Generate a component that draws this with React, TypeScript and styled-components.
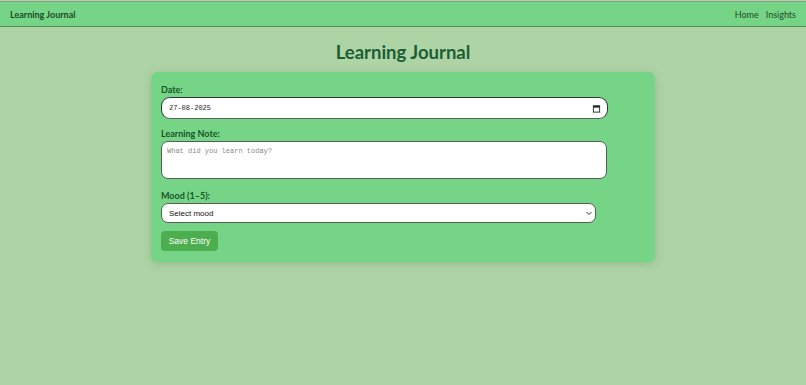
import styled, { createGlobalStyle } from "styled-components";

const GlobalStyle = createGlobalStyle`
  body {
    margin: 0;
    background: #aed4a6;
    font-family: Lato, "Open Sans", sans-serif;
  }
`;

const Page = styled.div`
  min-height: 385px;
  background: #aed4a6;
`;

const Navbar = styled.nav`
  display: flex;
  justify-content: space-between;
  align-items: center;
  height: 24px;
  margin-top: 1px;
  padding: 0 10px;
  background: #75d485;
  border-top: 1px solid #8a9a8a;
  border-bottom: 1px solid #4f8f5a;
`;

const Brand = styled.div`
  font-size: 9px;
  font-weight: 700;
  color: #1d4d2a;
`;

const NavLinks = styled.div`
  display: flex;
  gap: 7px;
`;

const NavLink = styled.a`
  font-size: 9px;
  color: #1d4d2a;
  text-decoration: none;
`;

const Title = styled.h1`
  margin: 14px 0 9px;
  text-align: center;
  font-size: 18.5px;
  font-weight: 700;
  color: #1b5e34;
`;

const Card = styled.form`
  width: 484px;
  margin: 0 auto;
  padding: 12px 10px 11px;
  background: #75d485;
  border-radius: 7px;
  box-shadow: 0 2px 8px rgba(60, 110, 60, 0.25);
  display: flex;
  flex-direction: column;
  align-items: flex-start;
`;

const Label = styled.label`
  font-size: 9px;
  font-weight: 700;
  color: #1a552a;
  margin-bottom: 2px;
`;

const DateBox = styled.div`
  box-sizing: border-box;
  display: flex;
  align-items: center;
  width: 447px;
  height: 22px;
  margin-bottom: 9px;
  padding: 0 6px 0 7px;
  border: 1.5px solid #2f3a30;
  border-bottom-color: #5d665d;
  border-radius: 9px;
  background: #fff;
`;

const DateText = styled.input`
  flex: 1;
  min-width: 0;
  padding: 0;
  border: none;
  outline: none;
  background: transparent;
  font-family: "Liberation Mono", monospace;
  font-size: 7px;
  color: #222;
`;

const CalendarIcon = styled.svg`
  width: 9px;
  height: 9px;
  flex-shrink: 0;
`;

const NoteArea = styled.textarea`
  box-sizing: border-box;
  width: 446px;
  height: 38px;
  margin-bottom: 11px;
  padding: 5px 5px;
  border: 1px solid #556055;
  border-radius: 7px;
  background: #fff;
  resize: none;
  font-family: "Liberation Mono", monospace;
  font-size: 7px;
  &::placeholder {
    color: #8a8a8a;
  }
`;

const MoodSelect = styled.select`
  box-sizing: border-box;
  width: 435px;
  height: 20px;
  margin-bottom: 8px;
  padding: 0 7px;
  border: 1px solid #556055;
  border-radius: 7px;
  background: #fff
    url("data:image/svg+xml;utf8,<svg xmlns='http://www.w3.org/2000/svg' width='8' height='8' viewBox='0 0 8 8'><path d='M1.5 3l2.5 2.5L6.5 3' fill='none' stroke='%23333' stroke-width='1'/></svg>")
    no-repeat right 2px center;
  appearance: none;
  font-family: "Liberation Sans", Arial, sans-serif;
  font-size: 8px;
  color: #111;
`;

const SaveButton = styled.button`
  height: 20px;
  width: 57px;
  padding: 0;
  border: none;
  border-radius: 4px;
  background: #4cae4f;
  color: #fff;
  font-family: "Liberation Sans", Arial, sans-serif;
  font-size: 8.5px;
`;

export default function App() {
  return (
    <Page>
      <GlobalStyle />
      <Navbar>
        <Brand>Learning Journal</Brand>
        <NavLinks>
          <NavLink href="#">Home</NavLink>
          <NavLink href="#">Insights</NavLink>
        </NavLinks>
      </Navbar>
      <Title>Learning Journal</Title>
      <Card onSubmit={(e) => e.preventDefault()}>
        <Label htmlFor="date">Date:</Label>
        <DateBox>
          <DateText
            id="date"
            type="text"
            spellCheck={false}
            autoComplete="off"
            defaultValue="27-08-2025"
          />
          <CalendarIcon viewBox="0 0 10 10">
            <rect x="1.5" y="2" width="7" height="7" fill="none" stroke="#222" strokeWidth="1" />
            <rect x="1.5" y="2" width="7" height="2" fill="#222" />
          </CalendarIcon>
        </DateBox>
        <Label htmlFor="note">Learning Note:</Label>
        <NoteArea id="note" spellCheck={false} placeholder="What did you learn today?" />
        <Label htmlFor="mood">Mood (1–5):</Label>
        <MoodSelect id="mood" defaultValue="">
          <option value="">Select mood</option>
          <option value="1">1</option>
          <option value="2">2</option>
          <option value="3">3</option>
          <option value="4">4</option>
          <option value="5">5</option>
        </MoodSelect>
        <SaveButton type="submit">Save Entry</SaveButton>
      </Card>
    </Page>
  );
}
